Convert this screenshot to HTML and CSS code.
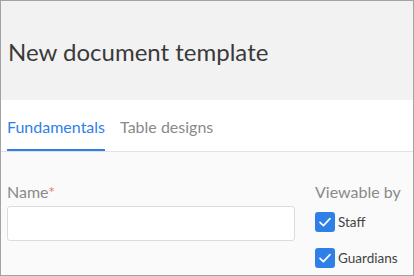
FILE: index.html
```html
<!DOCTYPE html>
<html>
<head>
<meta charset="utf-8">
<link rel="stylesheet" href="styles.css">
</head>
<body>
<div class="frame">
  <header class="head">
    <h1 class="title">New document template</h1>
  </header>
  <nav class="tabs">
    <span class="tab active">Fundamentals</span>
    <span class="tab">Table designs</span>
  </nav>
  <main class="content">
    <div class="field">
      <label class="label">Name<span class="req">*</span></label>
      <div class="input"></div>
    </div>
    <div class="viewable">
      <div class="label">Viewable by</div>
      <div class="check">
        <span class="box"><svg width="20" height="20" viewBox="0 0 20 20"><path d="M5 10.3 L8.4 13.6 L15 6.6" fill="none" stroke="#fff" stroke-width="1.7" stroke-linecap="round" stroke-linejoin="round"/></svg></span>
        <span class="ctext">Staff</span>
      </div>
      <div class="check">
        <span class="box"><svg width="20" height="20" viewBox="0 0 20 20"><path d="M5 10.3 L8.4 13.6 L15 6.6" fill="none" stroke="#fff" stroke-width="1.7" stroke-linecap="round" stroke-linejoin="round"/></svg></span>
        <span class="ctext">Guardians</span>
      </div>
    </div>
  </main>
</div>
</body>
</html>
```
FILE: styles.css
```css
* { box-sizing: border-box; }
html, body { margin: 0; padding: 0; }
body { font-family: Lato, "Open Sans", sans-serif; width: 414px; height: 276px; overflow: hidden; }
.frame {
  width: 414px; height: 276px;
  border: 1px solid #a3a3a3;
  background: #fafafa;
  display: flex; flex-direction: column;
}
.head {
  height: 99px;
  flex: none;
  background: #f2f2f2;
  display: flex; align-items: center;
  padding-left: 7px;
}
.title {
  margin: 0; font-weight: 400; font-size: 24px; color: #3a3a3a;
  line-height: 29px;
  padding-top: 1px;
}
.tabs {
  height: 52px;
  flex: none;
  background: #fff;
  border-bottom: 1px solid #e2e2e2;
  display: flex; gap: 15px;
  padding-left: 6px;
}
.tab {
  font-size: 16px; color: #8a8a8a;
  display: flex; align-items: center;
  padding-top: 4px;
  border-bottom: 2px solid transparent;
  height: 51px;
}
.tab.active { color: #2f7fe8; border-bottom-color: #2f7fe8; }
.content {
  display: flex; padding: 30px 0 0 6px;
}
.field { width: 288px; }
.label { font-size: 16px; color: #8a8a8a; line-height: 20px; display: block; }
.req { color: #f27a7a; }
.input {
  margin-top: 4px;
  height: 35px;
  background: #fff;
  border: 1px solid #dcdcdc;
  border-radius: 3px;
}
.viewable { margin-left: 20px; }
.check { display: flex; align-items: center; margin-top: 10px; height: 20px; }
.check + .check { margin-top: 16px; }
.box {
  width: 20px; height: 20px; border-radius: 3px; background: #2f7fe8;
  display: block;
}
.box svg { display: block; }
.ctext { font-size: 13.5px; color: #444; margin-left: 3px; }
```
